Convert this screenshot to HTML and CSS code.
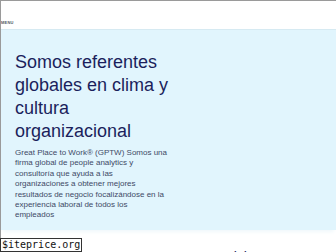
FILE: index.html
```html
<!DOCTYPE html>
<html lang="es">
<head>
<meta charset="utf-8">
<title>Great Place to Work</title>
<link rel="stylesheet" href="styles.css">
</head>
<body>
<div class="frame">
  <header class="topbar">
    <span class="menu">MENU</span>
  </header>
  <section class="hero">
    <h1 class="hero-title">Somos referentes globales en clima y cultura organizacional</h1>
    <p class="hero-text">Great Place to Work® (GPTW) Somos una firma global de people analytics y consultoría que ayuda a las organizaciones a obtener mejores resultados de negocio focalizándose en la experiencia laboral de todos los empleados</p>
  </section>
  <section class="services">
    <h2 class="services-title">Nuestros Servicios</h2>
  </section>
</div>
<div class="watermark">$iteprice.org</div>
</body>
</html>
```
FILE: styles.css
```css
html, body {
  margin: 0;
  padding: 0;
  background: #ffffff;
  overflow: hidden;
  width: 336px;
  height: 252px;
}
body {
  font-family: "Liberation Sans", Arial, sans-serif;
  position: relative;
}
.frame {
  border-top: 1px solid #9a9a9a;
  border-left: 1px solid #9a9a9a;
  height: 251px;
  overflow: hidden;
}
.topbar {
  height: 28px;
  display: flex;
  align-items: flex-end;
  background: #ffffff;
}
.menu {
  font-size: 4px;
  font-weight: bold;
  color: #555a66;
  letter-spacing: 0.2px;
  line-height: 6px;
  margin-bottom: 3px;
}
.hero {
  background: #e1f5fd;
  padding: 21px 15px 9px 14px;
  border-top: 1px solid #d6eaf2;
  box-shadow: 0 4px 4px -2px #f0f8fb;
}
.hero-title {
  margin: 0;
  font-weight: normal;
  font-size: 18px;
  line-height: 23px;
  color: #1b1f5c;
  width: 165px;
}
.hero-text {
  margin: 5px 0 0 0;
  font-size: 8px;
  line-height: 10.4px;
  color: #3e4a66;
  width: 152px;
}
.services {
  padding: 19px 0 0 144px;
  display: flex;
}
.services-title {
  margin: 0;
  font-weight: normal;
  font-size: 14px;
  line-height: 16px;
  color: #1b1f5c;
  white-space: nowrap;
}
.watermark {
  position: absolute;
  left: 0;
  bottom: 0;
  background: #ffffff;
  border: 1px solid #333333;
  font-family: "DejaVu Sans Mono", "Liberation Mono", monospace;
  font-size: 10px;
  line-height: 12px;
  color: #111111;
  padding: 0 1px;
}
```
